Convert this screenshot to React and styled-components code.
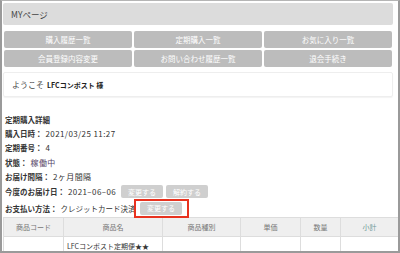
import React from 'react';
import styled, { createGlobalStyle } from 'styled-components';

const GlobalStyle = createGlobalStyle`
    body {
        margin: 0;
        background: #fff;
        font-family: "Noto Sans CJK JP", "Liberation Sans", sans-serif;
        color: #333;
    }
`;

const Frame = styled.div`
    width: 400px;
    height: 253px;
    box-sizing: border-box;
    border: 2px solid #9a9a9a;
    border-top: 1px solid #b5b5b5;
    padding: 2px 5px 0 1px;
    overflow: hidden;
`;

const Header = styled.div`
    height: 22px;
    background: #dcdcdc;
    border-radius: 2px;
    display: flex;
    align-items: center;
    padding-left: 8px;
    font-size: 8.5px;
    color: #444;
`;

const MenuGrid = styled.div`
    display: grid;
    grid-template-columns: repeat(3, 1fr);
    gap: 2px;
    margin: 6px 1px 0;
`;

const MenuButton = styled.div`
    height: 17px;
    background: #bcbcbc;
    border-radius: 2px;
    color: #fff;
    font-size: 7.5px;
    display: flex;
    align-items: center;
    justify-content: center;
`;

const Welcome = styled.div`
    margin-top: 5px;
    height: 23px;
    border: 1px solid #eee;
    border-radius: 2px;
    box-shadow: 0 1px 1px rgba(0, 0, 0, 0.05);
    display: flex;
    align-items: center;
    padding-left: 8px;
    font-size: 8px;
    color: #444;
    gap: 3px;
`;

const Customer = styled.b`
    font-size: 7px;
    color: #222;
`;

const Detail = styled.div`
    margin-top: 16px;
    padding-left: 2px;
    font-size: 7.5px;
`;

const Title = styled.div`
    font-weight: bold;
    color: #333;
    height: 13px;
    line-height: 13px;
`;

const Row = styled.div`
    display: flex;
    align-items: center;
    height: ${(p) => p.h || 14.5}px;
    white-space: nowrap;
`;

const Label = styled.span`
    font-weight: bold;
    color: #333;
    margin-right: 3px;
`;

const Value = styled.span`
    color: ${(p) => p.color || '#333'};
    font-size: ${(p) => p.size || 8}px;
    letter-spacing: ${(p) => (p.size ? 0 : 0.4)}px;
`;

const SmallButton = styled.span`
    display: inline-flex;
    align-items: center;
    justify-content: center;
    width: 42px;
    height: 13px;
    background: #cfcfcf;
    border-radius: 2px;
    color: #fff;
    font-size: 7px;
    margin-left: ${(p) => p.ml ?? 3}px;
`;

const Highlight = styled.span`
    display: inline-flex;
    align-items: center;
    justify-content: center;
    width: 55px;
    height: 19px;
    border: 2px solid #e8321f;
    box-sizing: border-box;
    margin-left: -2px;
`;

const Table = styled.table`
    width: 391px;
    border-collapse: collapse;
    font-size: 7px;
    table-layout: fixed;
`;

const Th = styled.th`
    width: ${(p) => p.w}px;
    height: 18px;
    background: #efefef;
    border: 1px solid #ddd;
    font-weight: normal;
    color: ${(p) => p.color || '#777'};
    padding: 0;
`;

const Td = styled.td`
    height: 17px;
    border: 1px solid #ddd;
    color: #333;
    padding: 0 3px;
    white-space: nowrap;
`;

const menu = ['購入履歴一覧', '定期購入一覧', 'お気に入り一覧', '会員登録内容変更', 'お問い合わせ履歴一覧', '退会手続き'];

const columns = [
    { name: '商品コード', w: 59 },
    { name: '商品名', w: 98 },
    { name: '商品種別', w: 77 },
    { name: '単価', w: 59 },
    { name: '数量', w: 39 },
    { name: '小計', w: 57, color: '#6f9a9a' },
];

export default function App() {
    return (
        <>
            <GlobalStyle />
            <Frame>
                <Header>MYページ</Header>
                <MenuGrid>
                    {menu.map((m) => (
                        <MenuButton key={m}>{m}</MenuButton>
                    ))}
                </MenuGrid>
                <Welcome>
                    ようこそ <Customer>LFCコンポスト 様</Customer>
                </Welcome>
                <Detail>
                    <Title>定期購入詳細</Title>
                    <Row><Label>購入日時：</Label><Value>2021/03/25 11:27</Value></Row>
                    <Row><Label>定期番号：</Label><Value>4</Value></Row>
                    <Row><Label>状態：</Label><Value color="#554466">稼働中</Value></Row>
                    <Row><Label>お届け間隔：</Label><Value>2ヶ月間隔</Value></Row>
                    <Row h={15}>
                        <Label>今度のお届け日：</Label><Value>2021–06–06</Value>
                        <SmallButton ml={5}>変更する</SmallButton>
                        <SmallButton>解約する</SmallButton>
                    </Row>
                    <Row h={18}>
                        <Label>お支払い方法：</Label><Value size={7.5}>クレジットカード決済</Value>
                        <Highlight><SmallButton ml={0}>変更する</SmallButton></Highlight>
                    </Row>
                </Detail>
                <Table>
                    <thead>
                        <tr>
                            {columns.map((c) => (
                                <Th key={c.name} w={c.w} color={c.color}>{c.name}</Th>
                            ))}
                        </tr>
                    </thead>
                    <tbody>
                        <tr>
                            <Td></Td>
                            <Td>LFCコンポスト定期便★★</Td>
                            <Td></Td>
                            <Td></Td>
                            <Td></Td>
                            <Td></Td>
                        </tr>
                    </tbody>
                </Table>
            </Frame>
        </>
    );
}
